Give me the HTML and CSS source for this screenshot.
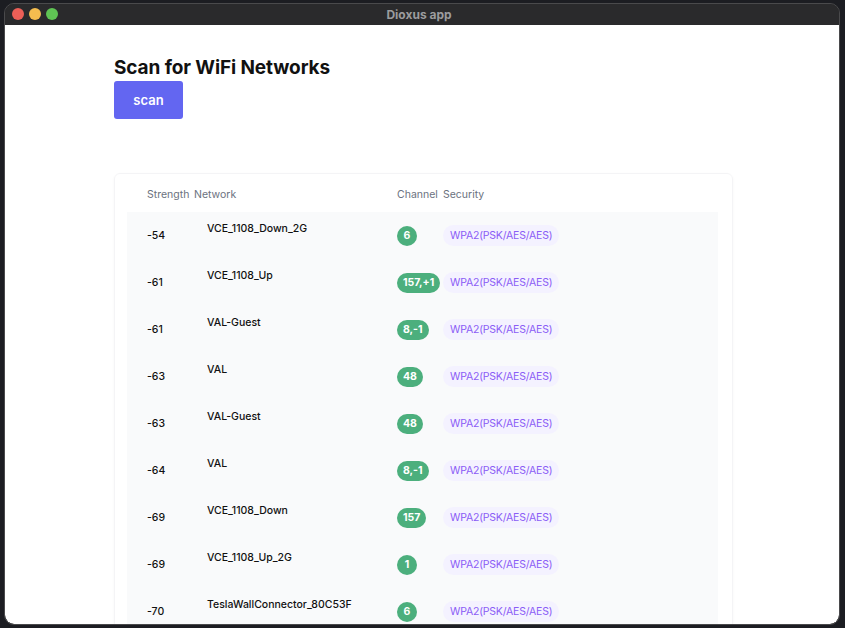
FILE: index.html
```html
<!DOCTYPE html>
<html lang="en">
<head>
<meta charset="utf-8">
<title>Dioxus app</title>
<link rel="stylesheet" href="styles.css">
</head>
<body>
<div class="window">
  <div class="titlebar">
    <div class="lights">
      <span class="light red"></span>
      <span class="light yellow"></span>
      <span class="light green"></span>
    </div>
    <div class="title">Dioxus app</div>
  </div>
  <div class="content">
    <div class="container">
      <h1 class="heading">Scan for WiFi Networks</h1>
      <button class="scan-btn">scan</button>
      <div class="card">
        <div class="head-row">
          <div class="hcell strength">Strength</div>
          <div class="hcell">Network</div>
          <div class="hcell">Channel</div>
          <div class="hcell">Security</div>
        </div>
        <div class="tbody">
          <div class="row"><div class="cell strength">-54</div><div class="cell name">VCE_1108_Down_2G</div><div class="cell"><span class="chan">6</span></div><div class="cell"><span class="sec">WPA2(PSK/AES/AES)</span></div></div>
          <div class="row"><div class="cell strength">-61</div><div class="cell name">VCE_1108_Up</div><div class="cell"><span class="chan">157,+1</span></div><div class="cell"><span class="sec">WPA2(PSK/AES/AES)</span></div></div>
          <div class="row"><div class="cell strength">-61</div><div class="cell name">VAL-Guest</div><div class="cell"><span class="chan">8,-1</span></div><div class="cell"><span class="sec">WPA2(PSK/AES/AES)</span></div></div>
          <div class="row"><div class="cell strength">-63</div><div class="cell name">VAL</div><div class="cell"><span class="chan">48</span></div><div class="cell"><span class="sec">WPA2(PSK/AES/AES)</span></div></div>
          <div class="row"><div class="cell strength">-63</div><div class="cell name">VAL-Guest</div><div class="cell"><span class="chan">48</span></div><div class="cell"><span class="sec">WPA2(PSK/AES/AES)</span></div></div>
          <div class="row"><div class="cell strength">-64</div><div class="cell name">VAL</div><div class="cell"><span class="chan">8,-1</span></div><div class="cell"><span class="sec">WPA2(PSK/AES/AES)</span></div></div>
          <div class="row"><div class="cell strength">-69</div><div class="cell name">VCE_1108_Down</div><div class="cell"><span class="chan">157</span></div><div class="cell"><span class="sec">WPA2(PSK/AES/AES)</span></div></div>
          <div class="row"><div class="cell strength">-69</div><div class="cell name">VCE_1108_Up_2G</div><div class="cell"><span class="chan">1</span></div><div class="cell"><span class="sec">WPA2(PSK/AES/AES)</span></div></div>
          <div class="row"><div class="cell strength">-70</div><div class="cell name">TeslaWallConnector_80C53F</div><div class="cell"><span class="chan">6</span></div><div class="cell"><span class="sec">WPA2(PSK/AES/AES)</span></div></div>
        </div>
      </div>
    </div>
  </div>
</div>
</body>
</html>
```

FILE: styles.css
```css
* { box-sizing: border-box; }
html, body { margin: 0; padding: 0; }
body {
  width: 845px;
  height: 628px;
  background: #1c1d22;
  font-family: Inter, "Noto Sans", sans-serif;
  overflow: hidden;
  padding: 3px 5px 3px 4px;
}
.window {
  width: 836px;
  height: 622px;
  border: 1px solid #4a4a4c;
  border-radius: 10px;
  overflow: hidden;
  display: flex;
  flex-direction: column;
  background: #2a2a2c;
}
.titlebar {
  height: 21px;
  flex: none;
  background: #2a2a2c;
  position: relative;
  display: flex;
  align-items: center;
  justify-content: center;
}
.lights {
  position: absolute;
  left: 7px;
  top: 4px;
  display: flex;
  gap: 5px;
}
.light {
  width: 12px;
  height: 12px;
  border-radius: 50%;
  display: block;
}
.red { background: #ec5f57; }
.yellow { background: #f4bd4f; }
.green { background: #5fc454; }
.title {
  color: #9c9c9e;
  font-size: 12px;
  font-weight: 700;
  margin-left: -6px;
}
.content {
  flex: 1;
  background: #ffffff;
  overflow: hidden;
  border-radius: 0 0 9px 9px;
}
.container {
  padding: 29px 0 0 109px;
  width: 728px;
}
.heading {
  margin: 0;
  font-size: 19px;
  line-height: 27px;
  font-weight: 700;
  color: #111111;
  letter-spacing: -0.1px;
}
.scan-btn {
  display: block;
  width: 69px;
  height: 38px;
  border: none;
  border-radius: 3px;
  background: #6366f1;
  color: #ffffff;
  font-family: inherit;
  font-size: 13px;
  font-weight: 600;
  padding: 0;
}
.card {
  margin-top: 54px;
  width: 619px;
  border: 1px solid #f4f4f6;
  border-radius: 6px;
  box-shadow: 0 1px 3px rgba(0,0,0,0.04);
  padding: 0 14px 0 12px;
  height: 470px;
}
.head-row, .row {
  display: grid;
  grid-template-columns: 67px 203px 46px 1fr;
}
.head-row {
  height: 38px;
  align-items: center;
  padding-top: 2px;
}
.hcell {
  font-size: 10.5px;
  color: #6b7280;
}
.strength { padding-left: 20px; }
.tbody { background: #f9fafb; }
.row {
  height: 47px;
  align-items: center;
}
.cell {
  font-size: 10.5px;
  color: #111111;
  font-weight: 500;
}
.cell.name {
  align-self: start;
  padding-top: 10px;
  padding-left: 13px;
}
.chan {
  display: inline-flex;
  align-items: center;
  justify-content: center;
  min-width: 20px;
  height: 20px;
  padding: 0 6px;
  border-radius: 10px;
  background: #4caf7d;
  color: #ffffff;
  font-weight: 700;
  font-size: 10.5px;
}
.sec {
  display: inline-flex;
  align-items: center;
  height: 21px;
  padding: 0 7px;
  border-radius: 11px;
  background: #f4f2ff;
  color: #8b5cf6;
  font-size: 10.5px;
  font-weight: 400;
  letter-spacing: -0.2px;
}
```
